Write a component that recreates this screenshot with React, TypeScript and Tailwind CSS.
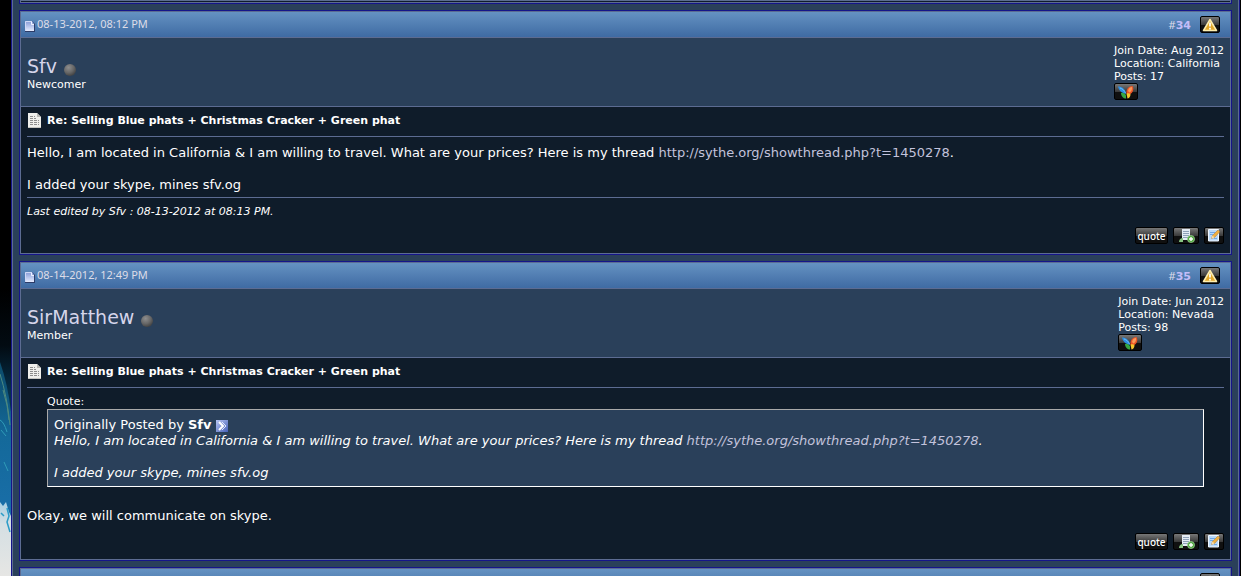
import React from 'react';

type PostData = {
  number: number;
  date: string;
  user: string;
  rank: string;
  joined: string;
  location: string;
  posts: number;
};

const POSTS: PostData[] = [
  { number: 34, date: '08-13-2012, 08:12 PM', user: 'Sfv', rank: 'Newcomer', joined: 'Aug 2012', location: 'California', posts: 17 },
  { number: 35, date: '08-14-2012, 12:49 PM', user: 'SirMatthew', rank: 'Member', joined: 'Jun 2012', location: 'Nevada', posts: 98 },
];

const THREAD_URL = 'http://sythe.org/showthread.php?t=1450278';
const TITLE = 'Re: Selling Blue phats + Christmas Cracker + Green phat';

// slice of the planet artwork behind the page
function Artwork() {
  return (
    <svg className="h-full w-[11px] shrink-0" viewBox="0 0 11 576" preserveAspectRatio="none" aria-hidden="true">
      <defs>
        <linearGradient id="sky" x1="0" y1="0" x2="0" y2="1">
          <stop offset=".5" stopColor="#000" />
          <stop offset=".6" stopColor="#020b12" />
          <stop offset=".68" stopColor="#06304a" />
        </linearGradient>
        <linearGradient id="sea" x1="0" y1="0" x2="0" y2="1">
          <stop offset="0" stopColor="#0b4a68" />
          <stop offset=".35" stopColor="#14699a" />
          <stop offset="1" stopColor="#1d72b4" />
        </linearGradient>
        <linearGradient id="ice" x1="0" y1="0" x2="0" y2="1">
          <stop offset="0" stopColor="#a9cfe2" />
          <stop offset=".3" stopColor="#d5dfe3" />
          <stop offset="1" stopColor="#e6e6e4" />
        </linearGradient>
      </defs>
      <path d="M0 0h11v576H0z" fill="url(#sky)" />
      <path d="M0 362Q8 385 11 412V576H0z" fill="url(#sea)" />
      <path d="M0 374Q7 396 10 425M3 390Q8 405 9 420" fill="none" stroke="#4d8a80" strokeWidth="1" />
      <path d="M0 420q4 2 7 12M1 430l5 6M4 462l4 9" fill="none" stroke="#2f9bb8" strokeWidth="1" />
      <path d="M0 502l3 4 3-4 3 10 2 4V576H0z" fill="url(#ice)" />
      <path d="M7 508l2 8-2 6 3 10M1 513l3 3" fill="none" stroke="#2a9cc8" strokeWidth="1.500" />
    </svg>
  );
}

function PostFlag() {
  return (
    <svg width="10" height="11" viewBox="0 0 10 11" aria-hidden="true">
      <defs>
        <linearGradient id="flag" x1="0" y1="0" x2="0" y2="1">
          <stop offset="0" stopColor="#8499d6" />
          <stop offset="1" stopColor="#e6ecff" />
        </linearGradient>
      </defs>
      <path d="M0 0h7l3 3v8H0z" fill="#2c3c68" />
      <path d="M0 0h7l2 3v7H0z" fill="url(#flag)" />
      <path d="M.5 10V.5H7" fill="none" stroke="#cfd8f6" />
      <path d="M6.500 1v2.500H9" fill="none" stroke="#eef2ff" />
    </svg>
  );
}

function PageIcon() {
  return (
    <svg width="14" height="15" viewBox="0 0 14 15" aria-hidden="true">
      <path d="M1 0h9l4 4v11H1z" fill="#efefec" />
      <path d="M10 0v4h4z" fill="#b9b9b6" />
      <path d="M3 3.500h5M3 5.500h6M3 7.500h9M3 9.500h9M3 11.500h9" stroke="#8d8d8d" strokeDasharray="3 1" />
      <path d="M1 14.500h13" stroke="#c4c4c0" />
    </svg>
  );
}

function OfflineDot() {
  return (
    <svg width="12" height="12" viewBox="0 0 12 12" role="img" aria-label="offline">
      <defs>
        <radialGradient id="dot" cx=".38" cy=".3" r=".7">
          <stop offset="0" stopColor="#8e8e8e" />
          <stop offset=".6" stopColor="#686868" />
          <stop offset="1" stopColor="#454545" />
        </radialGradient>
      </defs>
      <circle cx="6" cy="6" r="6" fill="url(#dot)" />
    </svg>
  );
}

function WarningIcon() {
  return (
    <svg width="16" height="14" viewBox="0 0 16 14" aria-hidden="true">
      <path d="M8 1.500 14.500 12.500H1.500z" fill="#e3a92c" stroke="#fdeeb0" strokeWidth="1.500" strokeLinejoin="round" />
      <path d="M8 4.500v4M8 9.800v1.600" stroke="#fffdf0" strokeWidth="1.800" />
    </svg>
  );
}

function MessengerIcon() {
  return (
    <svg width="18" height="14" viewBox="0 0 18 14" aria-hidden="true">
      <path d="M1 1.500C5 1.500 8.500 4 9 9 5.500 8.500 2 6 1 1.500z" fill="#2b8fe6" />
      <path d="M3 3c2.500.8 4.500 2.500 5.500 5" fill="none" stroke="#6fc0f5" />
      <path d="M4 8c2-.5 4.500.5 5 2.500V13.500C6.500 13.500 4 11.500 4 8z" fill="#35a844" />
      <path d="M9.500 9C9 5 11 1 15.500 1c1.800 3 .5 7-3 8.500z" fill="#ee5526" />
      <path d="M11 6c.5-2.500 2-4 4-4 .5 2-.5 4.500-2.500 5.500z" fill="#fa9a5a" />
      <path d="M9.500 8.800c1.500-.8 3-.5 4 .2 0 2.500-1 4-3 4.500z" fill="#f5c52c" />
    </svg>
  );
}

function MultiQuoteIcon() {
  return (
    <svg width="17" height="14" viewBox="0 0 17 14" aria-hidden="true">
      <path d="M4 0h8v11H4z" fill="#e4ebf3" />
      <path d="M5 2.500h6M5 4.500h6M5 6.500h6M5 8.500h5" stroke="#8fa1b8" />
      <path d="M1 13c.2-2.500 1.500-4 4-4v4z" fill="#86c480" />
      <circle cx="13" cy="10" r="3.600" fill="#55a846" stroke="#a9d99e" strokeWidth=".6" />
      <path d="M13 8v4M11 10h4" stroke="#fff" strokeWidth="1.400" />
    </svg>
  );
}

function EditIcon() {
  return (
    <svg width="12" height="13" viewBox="0 0 12 13" aria-hidden="true">
      <path d="M.5.5h10v11.500H.5z" fill="#b9d8f8" stroke="#eef6ff" />
      <path d="M2 3.500h5M2 5.500h3M6 9.500h3" stroke="#6fa8e8" />
      <path d="m3.500 9.500 1-3L10 1l1.800 1.800L6.500 8.500z" fill="#f0b040" stroke="#a8742a" strokeWidth=".5" />
      <path d="m3.500 9.500 1-3 2 2z" fill="#f8dfae" />
    </svg>
  );
}

function ViewPostIcon() {
  return (
    <svg width="12" height="12" viewBox="0 0 12 12" aria-hidden="true">
      <defs>
        <linearGradient id="view" x1="0" y1="0" x2="1" y2="1">
          <stop offset="0" stopColor="#b9c6f2" />
          <stop offset="1" stopColor="#4560b8" />
        </linearGradient>
      </defs>
      <path d="M0 0h12v12H0z" fill="url(#view)" />
      <path d="m3 2 4 4-4 4" fill="none" stroke="#fff" strokeWidth="2" />
      <path d="m6 2 4 4-4 4" fill="none" stroke="#dfe6fb" />
    </svg>
  );
}

function IconButton({ label, className, children }: { label: string; className: string; children: React.ReactNode }) {
  return (
    <button
      aria-label={label}
      className={`flex h-[17px] items-center justify-center rounded-[2px] border border-black bg-linear-to-b from-[#787878] from-0% via-[#3c3c3c] via-50% to-[#101010] to-55% ${className}`}
    >
      {children}
    </button>
  );
}

function Frame({ children, className = '' }: { children?: React.ReactNode; className?: string }) {
  return (
    <div className={`border border-[#15158a] ${className}`}>
      <div className="border border-[#5c6c92] bg-[#0f1c2a]">{children}</div>
    </div>
  );
}

function PostBar({ date, number }: { date?: string; number?: number }) {
  return (
    <div className="flex h-[26px] items-center justify-between border-b border-[#5c6c92] bg-linear-to-b from-[#6592c2] to-[#3f6ba3] pl-1 pr-[10px] text-[#dddde8]">
      <div className="flex items-end gap-[2px] font-['Noto_Sans',sans-serif] text-[11px] leading-[13px]">
        <PostFlag />
        <span className="pb-[2px]">{date}</span>
      </div>
      <div className="flex items-center gap-[9px] text-[11px] leading-[13px]">
        {number && (
          <span>
            <span className="font-['Noto_Sans',sans-serif]">#</span>
            <a href={`#post${number}`} className="font-bold text-[#c3bdf8]">{number}</a>
          </span>
        )}
        <IconButton label="Report post" className="w-5">
          <WarningIcon />
        </IconButton>
      </div>
    </div>
  );
}

function Post({ post, children }: { post: PostData; children: React.ReactNode }) {
  return (
    <Frame>
      <PostBar date={post.date} number={post.number} />
      <div className="flex h-[69px] items-start justify-between border-b border-[#5c6c92] bg-[#2a405a] px-[6px] pt-[6px]">
        <div className="pt-[10px]">
          <div className="flex items-center gap-[7px]">
            <a href="#profile" className="text-[19px] leading-6 text-[#d5d5ea]">{post.user}</a>
            <span className="pt-2"><OfflineDot /></span>
          </div>
          <div className="text-[11px] leading-[13px]">{post.rank}</div>
        </div>
        <div className="text-[11px] leading-[13px]">
          <div>Join Date: {post.joined}</div>
          <div>Location: {post.location}</div>
          <div>Posts: {post.posts}</div>
          <IconButton label="Send message" className="w-6">
            <MessengerIcon />
          </IconButton>
        </div>
      </div>
      <div className="px-[6px] pt-[6px] pb-[9px]">
        <div className="flex h-6 items-start gap-[6px] border-b border-[#5c6c92]">
          <PageIcon />
          <h2 className="text-[11px] font-bold leading-[15px]">{TITLE}</h2>
        </div>
        {children}
        <div className="flex justify-end gap-[5px] pt-[9px]">
          <IconButton label="Quote" className="w-[33px] font-['Noto_Sans',sans-serif] text-[10px] font-medium leading-3">quote</IconButton>
          <IconButton label="Multi-quote" className="w-[26px]"><MultiQuoteIcon /></IconButton>
          <IconButton label="Quick reply" className="w-5"><EditIcon /></IconButton>
        </div>
      </div>
    </Frame>
  );
}

function Message() {
  return (
    <>
      <p>
        Hello, I am located in California &amp; I am willing to travel. What are your prices? Here is my thread{' '}
        <a href={THREAD_URL} className="text-[#c3c3dc]">{THREAD_URL}</a>.
      </p>
      <p className="pt-4">I added your skype, mines sfv.og</p>
    </>
  );
}

export default function App() {
  return (
    <div className="flex h-screen overflow-hidden bg-black pr-px font-[Verdana,'DejaVu_Sans',sans-serif] text-white">
      <Artwork />
      <main className="grow self-start border-x border-[#15158a]">
        <div className="flex flex-col gap-[6px] border-x border-[#5c6c92] bg-[#2a405a] px-[6px]">
          <Frame className="border-t-0">
            <div className="h-px" />
          </Frame>
          <Post post={POSTS[0]}>
            <div className="pt-2 text-[13px] leading-4"><Message /></div>
            <p className="mt-1 border-t border-[#5c6c92] pt-[7px] text-[11px] italic leading-[13px]">
              Last edited by Sfv : 08-13-2012 at 08:13 PM.
            </p>
          </Post>
          <Post post={POSTS[1]}>
            <div className="mx-5 pt-[7px]">
              <div className="pb-px text-[11px] leading-[13px]">Quote:</div>
              <blockquote className="border border-t-[#a9a9a9] border-l-[#a9a9a9] border-b-white border-r-white bg-[#2a405a] px-[6px] pt-[7px] pb-[5px] text-[13px] leading-4">
                <div className="flex items-center gap-[5px]">
                  <span>Originally Posted by <b>Sfv</b></span>
                  <a href="#post34" aria-label="View post" className="pt-px"><ViewPostIcon /></a>
                </div>
                <div className="italic"><Message /></div>
              </blockquote>
            </div>
            <p className="pt-[21px] text-[13px] leading-4">Okay, we will communicate on skype.</p>
          </Post>
          <Frame>
            <PostBar />
          </Frame>
        </div>
      </main>
    </div>
  );
}
